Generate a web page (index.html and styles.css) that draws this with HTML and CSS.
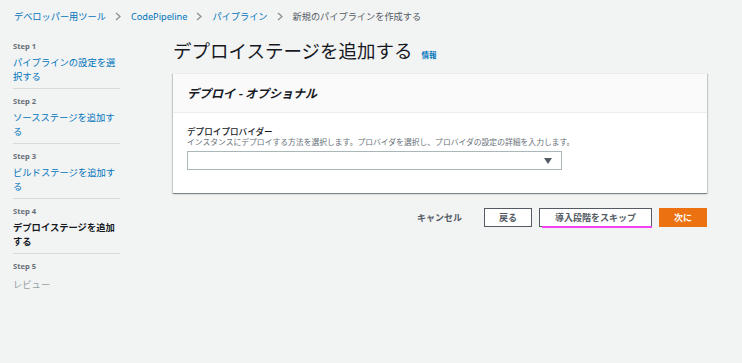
FILE: index.html
```html
<!DOCTYPE html>
<html lang="ja">
<head>
  <meta charset="UTF-8" />
  <meta name="viewport" content="width=device-width, initial-scale=1.0"/>
  <title>デプロイステージを追加する</title>
  <link rel="stylesheet" href="styles.css">
</head>
<body>
  <nav class="breadcrumbs">
    <a href="#">デベロッパー用ツール</a>
    <svg class="chevron" width="6" height="9" viewBox="0 0 6 9"><polyline points="1,1 5,4.5 1,8" fill="none" stroke="#879196" stroke-width="1.3"/></svg>
    <a href="#">CodePipeline</a>
    <svg class="chevron" width="6" height="9" viewBox="0 0 6 9"><polyline points="1,1 5,4.5 1,8" fill="none" stroke="#879196" stroke-width="1.3"/></svg>
    <a href="#">パイプライン</a>
    <svg class="chevron" width="6" height="9" viewBox="0 0 6 9"><polyline points="1,1 5,4.5 1,8" fill="none" stroke="#879196" stroke-width="1.3"/></svg>
    <span class="current">新規のパイプラインを作成する</span>
  </nav>

  <div class="layout">
    <ul class="steps">
      <li class="step">
        <div class="step-num">Step 1</div>
        <a class="step-link" href="#">パイプラインの設定を選択する</a>
      </li>
      <li class="step">
        <div class="step-num">Step 2</div>
        <a class="step-link" href="#">ソースステージを追加する</a>
      </li>
      <li class="step">
        <div class="step-num">Step 3</div>
        <a class="step-link" href="#">ビルドステージを追加する</a>
      </li>
      <li class="step">
        <div class="step-num">Step 4</div>
        <span class="step-link active">デプロイステージを追加する</span>
      </li>
      <li class="step last">
        <div class="step-num">Step 5</div>
        <span class="step-link disabled">レビュー</span>
      </li>
    </ul>

    <main class="content">
      <h1><span>デプロイステージを追加する</span> <a class="info" href="#">情報</a></h1>

      <section class="card">
        <div class="card-header">デプロイ - オプショナル</div>
        <div class="card-body">
          <label class="field-label" for="provider">デプロイプロバイダー</label>
          <div class="field-desc">インスタンスにデプロイする方法を選択します。プロバイダを選択し、プロバイダの設定の詳細を入力します。</div>
          <div class="select" id="provider">
            <svg class="caret" width="8" height="6" viewBox="0 0 8 6"><polygon points="0,0 8,0 4,6" fill="#545b64"/></svg>
          </div>
        </div>
      </section>

      <div class="actions">
        <button class="btn-link">キャンセル</button>
        <button class="btn">戻る</button>
        <button class="btn skip">導入段階をスキップ</button>
        <button class="btn primary">次に</button>
      </div>
    </main>
  </div>
</body>
</html>
```

FILE: styles.css
```css
/* General */
body {
  margin: 0;
  background-color: #f2f3f3;
  font-family: "Noto Sans", "Noto Sans CJK JP", sans-serif;
  color: #16191f;
}

a {
  color: #0073bb;
  text-decoration: none;
}

/* Breadcrumbs */
.breadcrumbs {
  height: 30px;
  box-sizing: border-box;
  padding: 10px 14px 7px;
  display: flex;
  align-items: center;
  font-size: 9.2px;
  line-height: 13px;
}

.chevron {
  margin: 0 10px 0 9px;
}

.breadcrumbs .current {
  color: #545b64;
}

/* Layout */
.layout {
  display: flex;
  gap: 53px;
  padding: 0 35px 0 13px;
}

/* Steps nav */
.steps {
  width: 107px;
  margin: 0;
  padding: 11px 0 0;
  list-style: none;
}

.step {
  padding-bottom: 5px;
  border-bottom: 1px solid #d5dbdb;
  margin-bottom: 7px;
}

.step.last {
  border-bottom: none;
}

.step-num {
  font-size: 7.6px;
  line-height: 10px;
  font-weight: 700;
  color: #687078;
}

.step-link {
  display: block;
  margin-top: 4px;
  font-size: 9.3px;
  line-height: 14px;
  font-family: "Noto Sans CJK JP", sans-serif;
}

.step-link.active {
  font-weight: 700;
  color: #16191f;
}

.step-link.disabled {
  color: #95a0a3;
  margin-top: 6px;
}

/* Content */
.content {
  flex: 1;
  padding-top: 8px;
}

h1 {
  display: flex;
  align-items: baseline;
  gap: 9px;
  height: 24px;
  margin: 0 0 11px;
  font-size: 18.5px;
  line-height: 24px;
  font-weight: 400;
  font-family: "Noto Sans CJK JP", sans-serif;
}

.info {
  font-size: 7.5px;
  line-height: 10px;
  font-weight: 700;
}

/* Card */
.card {
  background: white;
  border-top: 1px solid #eaeded;
  box-shadow: 0 1px 1px 0 rgba(0, 28, 36, 0.3), 1px 1px 1px 0 rgba(0, 28, 36, 0.15), -1px 1px 1px 0 rgba(0, 28, 36, 0.15);
}

.card-header {
  background: #fafafa;
  border-bottom: 1px solid #eaeded;
  padding: 11px 14px 11px;
  font-size: 12px;
  line-height: 16px;
  font-weight: 700;
  font-style: italic;
  font-family: "Noto Sans CJK JP", sans-serif;
}

.card-body {
  padding: 12px 14px 23px;
}

.field-label {
  display: block;
  font-size: 8.6px;
  line-height: 12px;
  font-weight: 500;
  font-family: "Noto Sans CJK JP", sans-serif;
}

.field-desc {
  font-size: 7.8px;
  line-height: 10px;
  color: #687078;
  font-family: "Noto Sans CJK JP", sans-serif;
}

.select {
  width: 375px;
  height: 19px;
  margin-top: 4px;
  box-sizing: border-box;
  border: 1px solid #aab7b8;
  background: white;
  display: flex;
  align-items: center;
  justify-content: flex-end;
  padding-right: 9px;
}

/* Actions */
.actions {
  display: flex;
  justify-content: flex-end;
  align-items: center;
  gap: 7px;
  margin-top: 15px;
}

.actions button {
  height: 19px;
  padding: 0 14px;
  font-family: "Noto Sans CJK JP", sans-serif;
  font-size: 9px;
  font-weight: 700;
  cursor: pointer;
}

.btn-link {
  background: none;
  border: none;
  color: #545b64;
  margin-right: 1px;
}

.btn {
  background: white;
  border: 1px solid #545b64;
  color: #545b64;
  position: relative;
}

.btn.skip {
  padding: 0 15px;
}

.btn.skip::after {
  content: "";
  position: absolute;
  left: 2px;
  right: -1px;
  bottom: -2px;
  height: 2px;
  background: #f542f0;
}

.btn.primary {
  background: #ec7211;
  border-color: #ec7211;
  color: white;
}
```
